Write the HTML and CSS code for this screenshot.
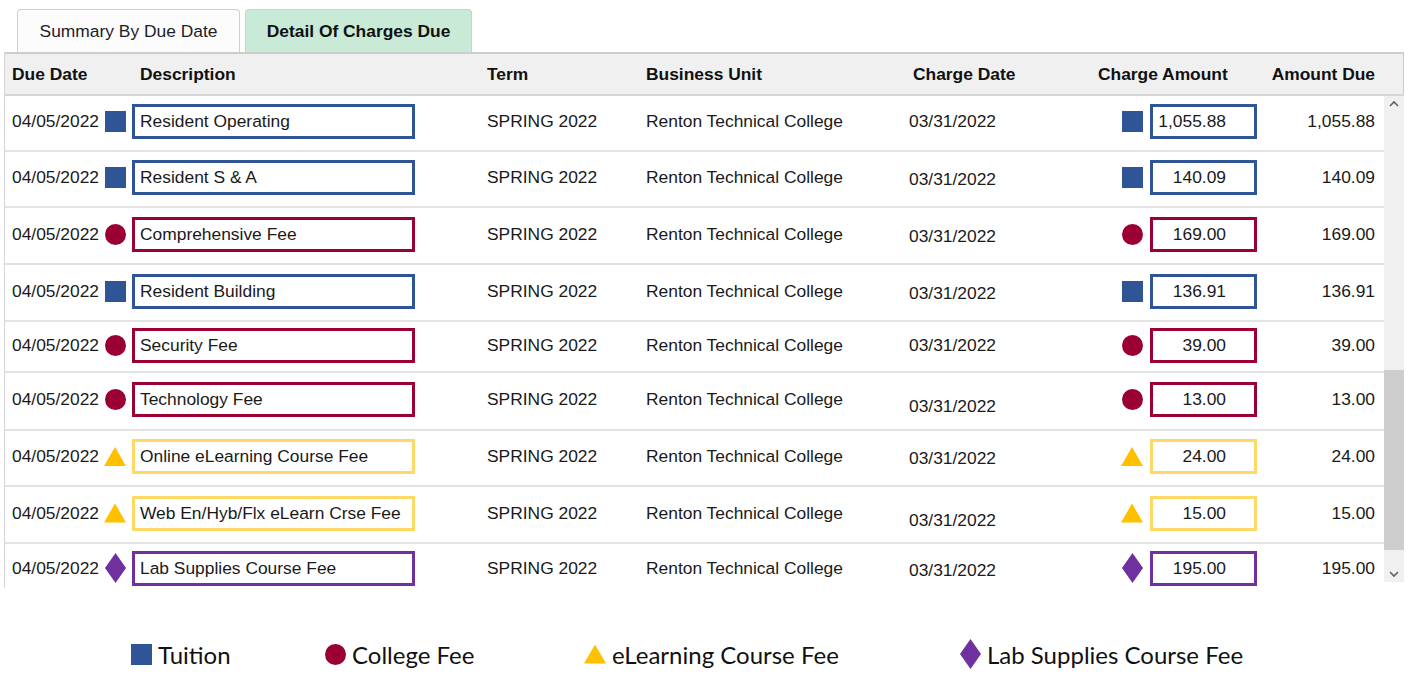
FILE: index.html
```html
<!DOCTYPE html>
<html lang="en">
<head>
  <meta charset="UTF-8">
  <title>Account Charges</title>
  <link rel="stylesheet" href="styles.css">
</head>
<body>
  <div class="tabs">
    <div class="tab">Summary By Due Date</div>
    <div class="tab tab-active">Detail Of Charges Due</div>
  </div>

  <div class="grid-frame">
    <div class="grid-head">
      <div class="cell">Due Date</div>
      <div class="cell cell-desc-head">Description</div>
      <div class="cell">Term</div>
      <div class="cell">Business Unit</div>
      <div class="cell cell-chdate-head">Charge Date</div>
      <div class="cell">Charge Amount</div>
      <div class="cell cell-due">Amount Due</div>
      <div></div>
    </div>

    <div class="grid-body">
      <div class="rows">
        <div class="row">
          <div class="cell cell-date">04/05/2022 <span class="mark tuition"></span></div>
          <div class="cell"><div class="box tuition-box">Resident Operating</div></div>
          <div class="cell">SPRING 2022</div>
          <div class="cell">Renton Technical College</div>
          <div class="cell">03/31/2022</div>
          <div class="cell cell-charge"><span class="mark tuition"></span><div class="box amount tuition-box">1,055.88</div></div>
          <div class="cell cell-due">1,055.88</div>
        </div>
        <div class="row">
          <div class="cell cell-date">04/05/2022 <span class="mark tuition"></span></div>
          <div class="cell"><div class="box tuition-box">Resident S &amp; A</div></div>
          <div class="cell">SPRING 2022</div>
          <div class="cell">Renton Technical College</div>
          <div class="cell cell-low">03/31/2022</div>
          <div class="cell cell-charge"><span class="mark tuition"></span><div class="box amount tuition-box">140.09</div></div>
          <div class="cell cell-due">140.09</div>
        </div>
        <div class="row row-tall">
          <div class="cell cell-date">04/05/2022 <span class="mark college"></span></div>
          <div class="cell"><div class="box college-box">Comprehensive Fee</div></div>
          <div class="cell">SPRING 2022</div>
          <div class="cell">Renton Technical College</div>
          <div class="cell cell-low">03/31/2022</div>
          <div class="cell cell-charge"><span class="mark college"></span><div class="box amount college-box">169.00</div></div>
          <div class="cell cell-due">169.00</div>
        </div>
        <div class="row row-tall">
          <div class="cell cell-date">04/05/2022 <span class="mark tuition"></span></div>
          <div class="cell"><div class="box tuition-box">Resident Building</div></div>
          <div class="cell">SPRING 2022</div>
          <div class="cell">Renton Technical College</div>
          <div class="cell cell-low">03/31/2022</div>
          <div class="cell cell-charge"><span class="mark tuition"></span><div class="box amount tuition-box">136.91</div></div>
          <div class="cell cell-due">136.91</div>
        </div>
        <div class="row row-short">
          <div class="cell cell-date">04/05/2022 <span class="mark college"></span></div>
          <div class="cell"><div class="box college-box">Security Fee</div></div>
          <div class="cell">SPRING 2022</div>
          <div class="cell">Renton Technical College</div>
          <div class="cell">03/31/2022</div>
          <div class="cell cell-charge"><span class="mark college"></span><div class="box amount college-box">39.00</div></div>
          <div class="cell cell-due">39.00</div>
        </div>
        <div class="row row-taller">
          <div class="cell cell-date">04/05/2022 <span class="mark college"></span></div>
          <div class="cell"><div class="box college-box">Technology Fee</div></div>
          <div class="cell">SPRING 2022</div>
          <div class="cell">Renton Technical College</div>
          <div class="cell cell-lower">03/31/2022</div>
          <div class="cell cell-charge"><span class="mark college"></span><div class="box amount college-box">13.00</div></div>
          <div class="cell cell-due">13.00</div>
        </div>
        <div class="row">
          <div class="cell cell-date">04/05/2022 <span class="mark elearn"></span></div>
          <div class="cell"><div class="box elearn-box">Online eLearning Course Fee</div></div>
          <div class="cell">SPRING 2022</div>
          <div class="cell">Renton Technical College</div>
          <div class="cell cell-low">03/31/2022</div>
          <div class="cell cell-charge"><span class="mark elearn"></span><div class="box amount elearn-box">24.00</div></div>
          <div class="cell cell-due">24.00</div>
        </div>
        <div class="row row-tall">
          <div class="cell cell-date">04/05/2022 <span class="mark elearn"></span></div>
          <div class="cell"><div class="box elearn-box">Web En/Hyb/Flx eLearn Crse Fee</div></div>
          <div class="cell">SPRING 2022</div>
          <div class="cell">Renton Technical College</div>
          <div class="cell cell-lower">03/31/2022</div>
          <div class="cell cell-charge"><span class="mark elearn"></span><div class="box amount elearn-box">15.00</div></div>
          <div class="cell cell-due">15.00</div>
        </div>
        <div class="row row-last">
          <div class="cell cell-date">04/05/2022 <span class="mark lab"></span></div>
          <div class="cell"><div class="box lab-box">Lab Supplies Course Fee</div></div>
          <div class="cell">SPRING 2022</div>
          <div class="cell">Renton Technical College</div>
          <div class="cell cell-low">03/31/2022</div>
          <div class="cell cell-charge"><span class="mark lab"></span><div class="box amount lab-box">195.00</div></div>
          <div class="cell cell-due">195.00</div>
        </div>
      </div>

      <div class="scrollbar">
        <svg class="arrow" width="12" height="8" viewBox="0 0 12 8"><polyline points="2,6 6,2 10,6" fill="none" stroke="#606060" stroke-width="1.6"/></svg>
        <div class="track"><div class="thumb"></div></div>
        <svg class="arrow" width="12" height="8" viewBox="0 0 12 8"><polyline points="2,2 6,6 10,2" fill="none" stroke="#606060" stroke-width="1.6"/></svg>
      </div>
    </div>
  </div>

  <div class="legend">
    <div class="legend-item"><span class="mark tuition"></span>Tuition</div>
    <div class="legend-item"><span class="mark college"></span>College Fee</div>
    <div class="legend-item"><span class="mark elearn"></span>eLearning Course Fee</div>
    <div class="legend-item"><span class="mark lab"></span>Lab Supplies Course Fee</div>
  </div>
</body>
</html>
```

FILE: styles.css
```css
* {
  box-sizing: border-box;
}

body {
  margin: 0;
  background: #fff;
  font-family: "Liberation Sans", Arial, sans-serif;
  font-size: 17.4px;
  color: #1a1a1a;
}

/* tabs */
.tabs {
  display: flex;
  gap: 5px;
  height: 52px;
  padding: 9px 0 0 17px;
}

.tab {
  width: 223px;
  height: 43px;
  display: flex;
  align-items: center;
  justify-content: center;
  border: 1px solid #cfcfcf;
  border-bottom: none;
  border-radius: 4px 4px 0 0;
  background: #fcfcfc;
  color: #1c1c2a;
}

.tab-active {
  width: 227px;
  background: #c9ead7;
  font-weight: bold;
  color: #111;
}

/* grid */
.grid-frame {
  margin-left: 4px;
  width: 1400px;
  border-left: 1px solid #d6d6d6;
}

.grid-head,
.row {
  display: grid;
  grid-template-columns: 127px 355px 159px 263px 189px 164px 121px;
}

.grid-head {
  grid-template-columns: 127px 355px 159px 263px 189px 164px 121px 20px;
  height: 44px;
  background: #f0f0f0;
  border-top: 2px solid #cdcdcd;
  border-bottom: 2px solid #d6d6d6;
  border-right: 1px solid #cdcdcd;
  font-weight: bold;
  color: #111;
}

.cell {
  display: flex;
  align-items: center;
  white-space: nowrap;
}

.grid-head .cell:first-child {
  padding-left: 7px;
}

.cell-desc-head {
  padding-left: 8px;
}

.cell-chdate-head {
  padding-left: 4px;
}

.cell-due {
  justify-content: flex-end;
  padding-right: 8px;
}

.grid-body {
  display: flex;
  height: 492px;
  overflow: hidden;
}

.rows {
  width: 1379px;
}

.row {
  height: 56px;
  padding-bottom: 3px;
  border-bottom: 2px solid #e3e3e3;
}

.row-short {
  height: 51px;
}

.row-tall {
  height: 57px;
}

.row-taller {
  height: 58px;
}

.row-last {
  border-bottom: none;
  height: 48px;
  padding-bottom: 0;
}

.cell-date {
  padding-left: 7px;
  justify-content: space-between;
  padding-right: 6px;
}

.cell-low {
  padding-top: 4px;
}

.cell-lower {
  padding-top: 14px;
}

.cell-charge {
  justify-content: flex-end;
  gap: 7px;
  padding-right: 5px;
}

.box {
  width: 283px;
  height: 35px;
  padding-left: 5px;
  border: 3px solid;
  line-height: 29px;
  background: #fff;
}

.box.amount {
  width: 107px;
  padding: 0 28px 0 0;
  text-align: right;
}

.tuition-box { border-color: #2f5597; }
.college-box { border-color: #9a0033; }
.elearn-box { border-color: #ffd966; }
.lab-box { border-color: #7030a0; }

/* category markers */
.mark {
  display: inline-block;
  flex: none;
  width: 21px;
  height: 21px;
}

.mark.tuition {
  background: #2f5597;
}

.mark.college {
  background: #9a0033;
  border-radius: 50%;
}

.mark.elearn {
  width: 22px;
  height: 19px;
  background: #ffc000;
  clip-path: polygon(50% 0, 100% 100%, 0 100%);
}

.mark.lab {
  height: 30px;
  background: #7030a0;
  clip-path: polygon(50% 0, 100% 50%, 50% 100%, 0 50%);
}

/* scrollbar */
.scrollbar {
  width: 20px;
  height: 486px;
  background: #f0f0f0;
  display: flex;
  flex-direction: column;
  align-items: center;
}

.arrow {
  flex: none;
  margin: 4px 0;
}

.track {
  flex: 1;
  width: 100%;
  padding-top: 258px;
  padding-bottom: 16px;
}

.thumb {
  height: 100%;
  background: #cdcdcd;
}

/* legend */
.legend {
  display: grid;
  grid-template-columns: 194px 259px 376px auto;
  align-items: center;
  margin-top: 51px;
  padding-left: 131px;
  font-family: Lato, "Open Sans", sans-serif;
  font-size: 24px;
  color: #111;
}

.legend-item {
  display: flex;
  align-items: center;
  gap: 6px;
}
```
